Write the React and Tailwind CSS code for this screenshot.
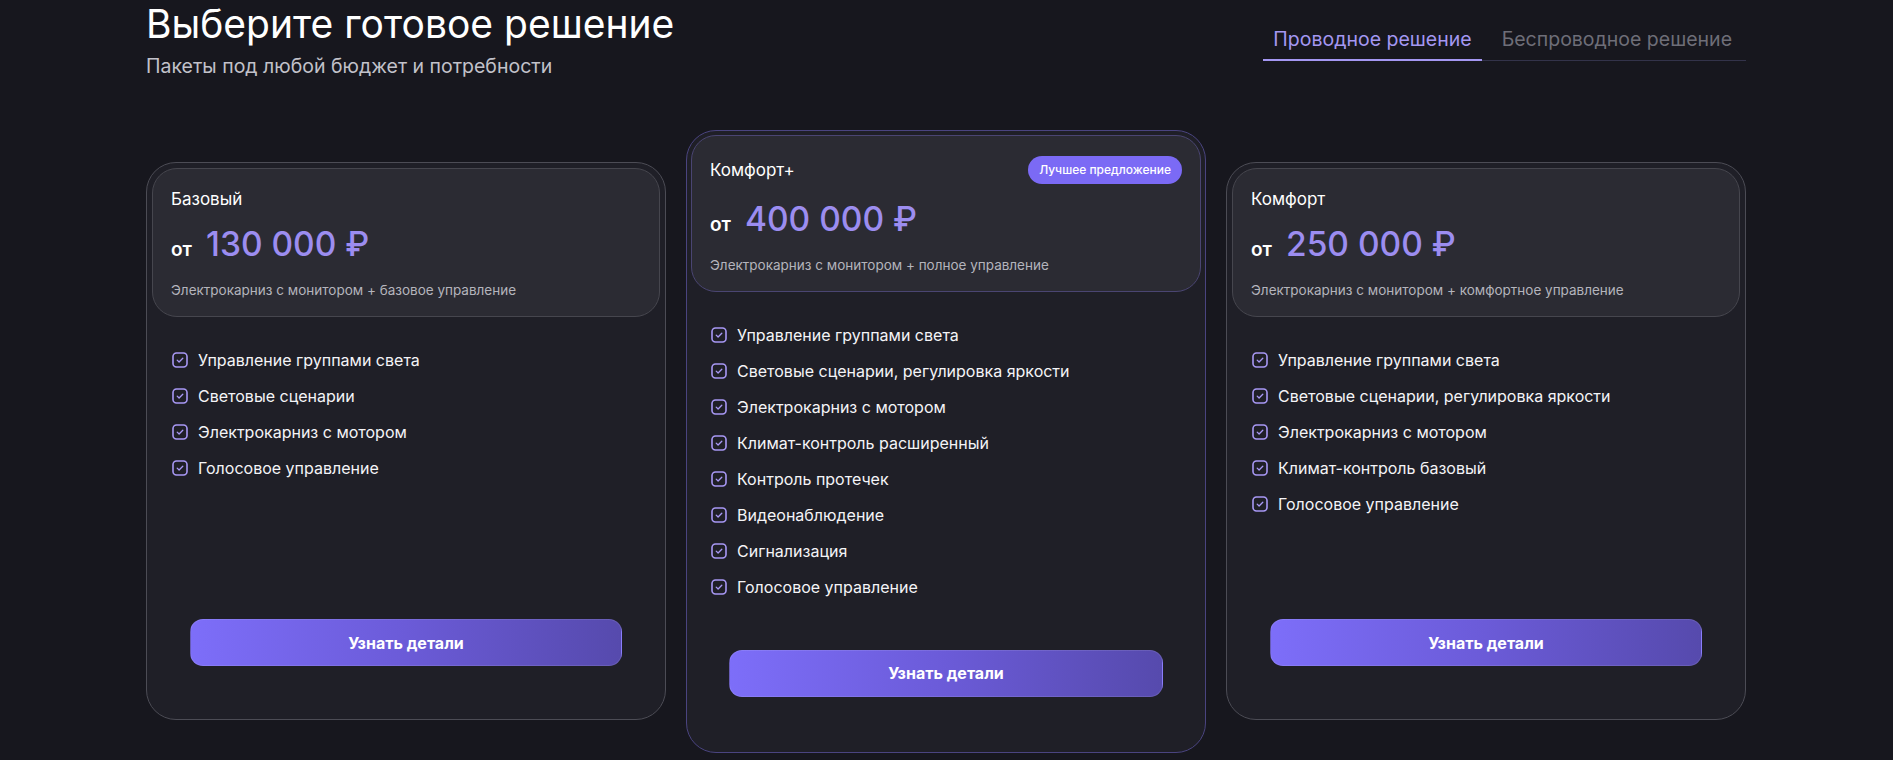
import React, { useState } from 'react';

const plans = [
  {
    id: 'basic',
    name: 'Базовый',
    price: '130 000 ₽',
    note: 'Электрокарниз с монитором + базовое управление',
    features: [
      'Управление группами света',
      'Световые сценарии',
      'Электрокарниз с мотором',
      'Голосовое управление'
    ]
  },
  {
    id: 'comfort-plus',
    name: 'Комфорт+',
    price: '400 000 ₽',
    note: 'Электрокарниз с монитором + полное управление',
    featured: true,
    features: [
      'Управление группами света',
      'Световые сценарии, регулировка яркости',
      'Электрокарниз с мотором',
      'Климат-контроль расширенный',
      'Контроль протечек',
      'Видеонаблюдение',
      'Сигнализация',
      'Голосовое управление'
    ]
  },
  {
    id: 'comfort',
    name: 'Комфорт',
    price: '250 000 ₽',
    note: 'Электрокарниз с монитором + комфортное управление',
    features: [
      'Управление группами света',
      'Световые сценарии, регулировка яркости',
      'Электрокарниз с мотором',
      'Климат-контроль базовый',
      'Голосовое управление'
    ]
  }
];

const tabs = [
  { id: 'wired', label: 'Проводное решение' },
  { id: 'wireless', label: 'Беспроводное решение' }
];

const CheckBox = () => (
  <svg width="16" height="16" viewBox="0 0 16 16" fill="none" className="shrink-0">
    <rect x="1" y="1" width="14" height="14" rx="3.5" stroke="#a898f5" strokeWidth="1.6" />
    <path d="M5.2 8.1l1.9 1.9 3.7-3.8" stroke="#a898f5" strokeWidth="1.3" strokeLinecap="round" strokeLinejoin="round" />
  </svg>
);

const PlanCard = ({ plan }) => {
  const featured = plan.featured;

  return (
    <div
      className={
        featured
          ? 'flex flex-col rounded-[30px] border border-[#4a4480] bg-[#1f1f27] p-[4px]'
          : 'flex flex-col min-h-[558px] rounded-[30px] border border-[#4c4c55] bg-[#1f1f27] p-[5px]'
      }
    >
      {/* Header block */}
      <div
        className={
          featured
            ? 'rounded-[25px] border border-[#4a4572] bg-[#2b2b33] px-[18px] pt-5 pb-4'
            : 'rounded-[25px] border border-[#46464e] bg-[#2b2b33] px-[18px] pt-[18px] pb-4'
        }
      >
        <div className={featured ? 'flex h-7 items-center justify-between' : 'flex h-6 items-center'}>
          <span className="text-[17px] leading-6 text-white">{plan.name}</span>
          {featured && (
            <span className="flex h-7 items-center rounded-full bg-[#7b6af5] px-[11px] text-[12px] font-medium text-white">
              Лучшее предложение
            </span>
          )}
        </div>
        <div className={featured ? 'mt-[15px] flex items-baseline gap-3.5' : 'mt-[13px] flex items-baseline gap-3.5'}>
          <span className="text-[19px] font-semibold text-white">от</span>
          <span className="text-[33.5px] leading-10 font-medium text-[#9c8df0]">{plan.price}</span>
        </div>
        <p className="mt-[15px] text-[13.5px] leading-5 text-[#b4b4bc]">{plan.note}</p>
      </div>

      {/* Feature list */}
      <ul className="flex flex-col gap-3 pl-[20px] pt-[31px]">
        {plan.features.map((item) => (
          <li key={item} className="flex items-center gap-2.5 text-[16px] leading-6 text-[#f4f4f7]">
            <CheckBox />
            <span>{item}</span>
          </li>
        ))}
      </ul>

      <div className={featured ? 'mt-auto px-[38px] pt-[51px] pb-[51px]' : 'mt-auto px-[38px] pt-[51px] pb-[48px]'}>
        <button className="flex h-[47px] w-full items-center justify-center rounded-[13px] border border-white/10 bg-gradient-to-r from-[#7d6ef9] via-[#6b5bd8] to-[#564aad] text-[16px] font-bold text-white">
          Узнать детали
        </button>
      </div>
    </div>
  );
};

export default function App() {
  const [activeTab, setActiveTab] = useState('wired');

  return (
    <div className="min-h-[760px] bg-[#17171e] font-['Inter','Noto_Sans',sans-serif]">
      <div className="ml-[146px] w-[1600px]">
        {/* Heading and tabs */}
        <div className="flex items-start justify-between">
          <div>
            <h2 className="text-[39px] leading-[48px] text-white">Выберите готовое решение</h2>
            <p className="mt-1 text-[19.5px] leading-7 text-[#c2c2ca]">Пакеты под любой бюджет и потребности</p>
          </div>
          <div className="mt-[17px] flex gap-2.5 border-b border-[#33334a] pr-1">
            {tabs.map((tab) => {
              const isActive = tab.id === activeTab;
              return (
                <button
                  key={tab.id}
                  onClick={() => setActiveTab(tab.id)}
                  className={
                    isActive
                      ? '-mb-px border-b-2 border-[#a497f2] px-2.5 pt-2 pb-1.5 text-[19.5px] leading-7 text-[#a497f2]'
                      : '-mb-px border-b-2 border-transparent px-2.5 pt-2 pb-1.5 text-[19.5px] leading-7 text-[#6e6e78]'
                  }
                >
                  {tab.label}
                </button>
              );
            })}
          </div>
        </div>

        {/* Plans */}
        <div className="mt-[50px] grid grid-cols-3 items-center gap-5">
          {plans.map((plan) => (
            <PlanCard key={plan.id} plan={plan} />
          ))}
        </div>
      </div>
    </div>
  );
}
